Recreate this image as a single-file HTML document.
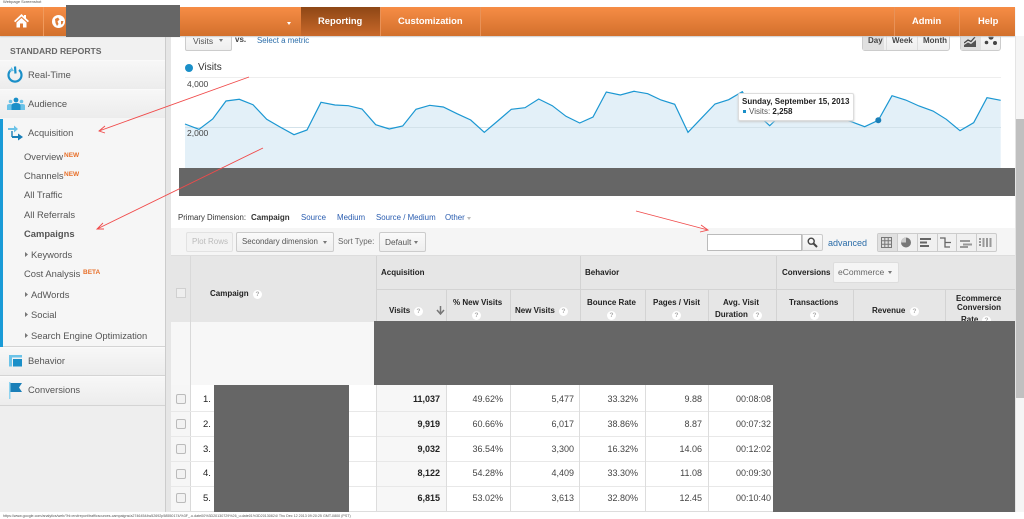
<!DOCTYPE html>
<html><head><meta charset="utf-8"><style>
html,body{margin:0;padding:0;background:#fff}
#p{position:relative;width:1024px;height:519px;overflow:hidden;background:#fff;font-family:"Liberation Sans",Arial,sans-serif;font-size:9px;color:#333;filter:blur(.3px)}
#p div,#p span.t,#p svg{position:absolute}
.t{position:absolute;white-space:nowrap;line-height:12px}
.b{font-weight:bold}
.w{color:#fff;font-weight:bold;font-size:9.4px}
.n{color:#555;font-size:9.3px}
.s{color:#555;font-size:9.4px}
.new{color:#e8702a;font-weight:bold;font-size:6.5px;line-height:6px}
.lk{color:#2a5db0;font-size:7.9px}
.h{font-weight:bold;font-size:8px;color:#222}
.q{width:9px;height:9px;border-radius:50%;background:#fff;color:#aaa;font-size:6.5px;line-height:9px;text-align:center;font-weight:bold}
.sec{left:0;width:165px;background:linear-gradient(#f7f7f7,#ececec);border-bottom:1px solid #d4d4d4;border-top:1px solid #fafafa}
.btn{background:linear-gradient(#fafafa,#eee);border:1px solid #ccc;border-radius:2px;box-sizing:border-box}
.row{left:0;width:1024px;height:12px;font-size:9px;color:#444}
.row .t{top:0}
.c1{right:584px;font-weight:bold;color:#222}.c2{right:521px}.c3{right:450px}.c4{right:386px}.c5{right:322px}.c6{right:253px}
.ln{background:#ddd}
.arr{border-top:3px solid #777;border-left:2.5px solid transparent;border-right:2.5px solid transparent;width:0;height:0}
</style></head><body><div id="p">

<span class="t" style="left:3px;top:-2px;font-size:4px;line-height:8px;color:#555">Webpage Screenshot</span>

<!-- sidebar -->
<div style="left:0;top:36px;width:165px;height:476px;background:#eee"></div>
<div style="left:165px;top:36px;width:6px;height:476px;background:#e6e6e6;border-left:1px solid #ccc;box-sizing:border-box"></div>
<div style="left:0;top:36px;width:165px;height:24px;background:#f1f1f1"></div>
<span class="t b" style="left:10px;top:45px;font-size:8.6px;color:#666">STANDARD REPORTS</span>
<div class="sec" style="top:60px;height:28px"></div>
<div class="sec" style="top:89px;height:28px"></div>
<div style="left:0;top:118px;width:165px;height:228px;background:#f6f6f6;border-bottom:1px solid #d4d4d4"></div>
<div style="left:0;top:119px;width:3px;height:228px;background:#1a9bd7"></div>
<div class="sec" style="top:347px;height:27px"></div>
<div class="sec" style="top:376px;height:28px"></div>

<svg style="left:7px;top:65px" width="17" height="18" viewBox="0 0 17 18"><path d="M4 5A6.5 6.5 0 1 0 12 5" fill="none" stroke="#1a8fc8" stroke-width="2.2"/><path d="M8 1.5L8.5 8.5" stroke="#1a8fc8" stroke-width="2.2"/><path d="M4.5 2L7 6 2.5 6.5Z" fill="#6cc3e8"/></svg>
<svg style="left:7px;top:97px" width="18" height="14" viewBox="0 0 18 14"><circle cx="3.5" cy="4.5" r="1.8" fill="#6cc3e8"/><circle cx="14.5" cy="4.5" r="1.8" fill="#6cc3e8"/><path d="M0 13V8.5Q0 7 3 7T6 9V13ZM12 13V9Q12 7 15 7T18 8.5V13Z" fill="#6cc3e8"/><circle cx="9" cy="3" r="2.4" fill="#1a8fc8"/><path d="M4.5 13V8.5Q4.5 6 9 6T13.5 8.5V13Z" fill="#1a8fc8"/></svg>
<svg style="left:8px;top:125px" width="16" height="16" viewBox="0 0 16 16"><path d="M0 3H6V0.5L10 4 6 7.5V5H0Z" fill="#6cc3e8"/><path d="M4 11H10V8.5L15 12 10 15.5V13H4Z" fill="#1a7fb8"/><path d="M4 6V12" stroke="#1a7fb8" stroke-width="1.4"/></svg>
<svg style="left:9px;top:355px" width="14" height="12" viewBox="0 0 14 12"><rect width="13" height="2.5" fill="#6cc3e8"/><rect y="2.5" width="3" height="9" fill="#6cc3e8"/><rect x="4" y="4" width="9" height="7.5" fill="#1a8fc8"/></svg>
<svg style="left:9px;top:382px" width="14" height="17" viewBox="0 0 14 17"><rect width="1.5" height="17" fill="#8fd3ef"/><path d="M1.5 1H13L10 5.5 13 10H1.5Z" fill="#1a7fb8"/></svg>

<span class="t s" style="left:28px;top:69px">Real-Time</span>
<span class="t s" style="left:28px;top:98px">Audience</span>
<span class="t s" style="left:28px;top:127px">Acquisition</span>
<span class="t s" style="left:24px;top:151px">Overview</span><span class="t new" style="left:64px;top:153px">NEW</span>
<span class="t s" style="left:24px;top:170px">Channels</span><span class="t new" style="left:64px;top:172px">NEW</span>
<span class="t s" style="left:24px;top:189px">All Traffic</span>
<span class="t s" style="left:24px;top:209px">All Referrals</span>
<span class="t s b" style="left:24px;top:228px">Campaigns</span>
<span class="t s" style="left:31px;top:249px">Keywords</span>
<span class="t s" style="left:24px;top:268px">Cost Analysis</span><span class="t new" style="left:83px;top:270px">BETA</span>
<span class="t s" style="left:31px;top:289px">AdWords</span>
<span class="t s" style="left:31px;top:309px">Social</span>
<span class="t s" style="left:31px;top:330px">Search Engine Optimization</span>
<span class="t s" style="left:28px;top:355px">Behavior</span>
<span class="t s" style="left:28px;top:384px">Conversions</span>
<svg style="left:25px;top:252px" width="4" height="90" viewBox="0 0 4 90"><path d="M0 0L3 2.500 0 5ZM0 40L3 42.500 0 45ZM0 60L3 62.500 0 65ZM0 81L3 83.500 0 86Z" fill="#777"/></svg>

<!-- top controls -->
<div class="btn" style="left:185px;top:30px;width:47px;height:21px"></div>
<span class="t n" style="left:193px;top:35px;font-size:8.5px">Visits</span>
<div class="arr" style="left:219px;top:39px"></div>
<span class="t b" style="left:235px;top:34px;font-size:8px;color:#444">vs.</span>
<span class="t lk" style="left:257px;top:35px;color:#2a6ca8">Select a metric</span>

<div class="btn" style="left:862px;top:30px;width:88px;height:21px;border-radius:3px"></div>
<div style="left:863px;top:31px;width:21px;height:19px;background:#e0e0e0"></div>
<div class="ln" style="left:886px;top:31px;width:1px;height:19px"></div>
<div class="ln" style="left:917px;top:31px;width:1px;height:19px"></div>
<span class="t b" style="left:868px;top:35px;font-size:8px;color:#444">Day</span>
<span class="t b" style="left:892px;top:35px;font-size:8px;color:#444">Week</span>
<span class="t b" style="left:923px;top:35px;font-size:8px;color:#444">Month</span>
<div class="btn" style="left:960px;top:30px;width:41px;height:21px;border-radius:3px"></div>
<div style="left:961px;top:31px;width:20px;height:19px;background:#e0e0e0"></div>
<svg style="left:964px;top:36px" width="13" height="11" viewBox="0 0 13 11"><path d="M0 7L4 4 7 5.500 11 1" fill="none" stroke="#444" stroke-width="1.300"/><path d="M0 11V9L4 6.500 7 8 12 4V11Z" fill="#555"/></svg>
<svg style="left:984px;top:34px" width="14" height="12" viewBox="0 0 14 12"><circle cx="7" cy="3" r="2.600" fill="#444"/><circle cx="2.500" cy="8.500" r="1.800" fill="#444"/><circle cx="11" cy="9" r="2" fill="#444"/></svg>

<!-- chart -->
<div style="left:185px;top:64px;width:8px;height:8px;background:#1a8fc8;border-radius:50%"></div>
<span class="t" style="left:198px;top:62px;font-size:10px;color:#333">Visits</span>
<svg style="left:0;top:0" width="1024" height="519" viewBox="0 0 1024 519">
<line x1="185" y1="77.500" x2="1001" y2="77.500" stroke="#eee"/>
<path d="M185 124L199 129.300 212.700 119 226 101 239.300 99.300 253 104.700 266.700 119.300 280 127 294 134.700 307 130 321 102.300 335 105 348.300 105.700 362 109 375.700 124.700 389.300 129 402.700 126 416 109.300 429.700 105.300 443.300 107 457 113.700 470.700 120 484.300 132.300 497.700 121 511.300 109.300 525 107.700 538.700 99 552.300 105.700 566 116.300 579.700 123 593 117 606.300 92 620.300 95 634 91.300 647.700 93.700 661 100 674.700 104.300 688 132.300 701.300 118.300 715 104 728.700 99.700 742.300 91.700 756 113 769.700 125.700 783 113 796.300 107 810 108 823 110 837 116 851.300 121.700 864.700 126.700 878.300 120.300 892 95.700 905.700 100 919 106 933 111 946.300 119.300 960 130.700 973.700 122.700 987 97.700 1000.700 100.300V168H185Z" fill="#e3f0f8"/>
<line x1="185" y1="127.500" x2="1001" y2="127.500" stroke="#d3e2ea"/>
<path d="M185 124L199 129.300 212.700 119 226 101 239.300 99.300 253 104.700 266.700 119.300 280 127 294 134.700 307 130 321 102.300 335 105 348.300 105.700 362 109 375.700 124.700 389.300 129 402.700 126 416 109.300 429.700 105.300 443.300 107 457 113.700 470.700 120 484.300 132.300 497.700 121 511.300 109.300 525 107.700 538.700 99 552.300 105.700 566 116.300 579.700 123 593 117 606.300 92 620.300 95 634 91.300 647.700 93.700 661 100 674.700 104.300 688 132.300 701.300 118.300 715 104 728.700 99.700 742.300 91.700 756 113 769.700 125.700 783 113 796.300 107 810 108 823 110 837 116 851.300 121.700 864.700 126.700 878.300 120.300 892 95.700 905.700 100 919 106 933 111 946.300 119.300 960 130.700 973.700 122.700 987 97.700 1000.700 100.300" fill="none" stroke="#1b97d2" stroke-width="1.200"/>
<circle cx="878.300" cy="120.300" r="3" fill="#1a7fb8"/>
</svg>
<span class="t" style="left:187px;top:78px;font-size:8.500px;color:#444">4,000</span>
<span class="t" style="left:187px;top:127px;font-size:8.500px;color:#444">2,000</span>
<div style="left:738px;top:93px;width:116px;height:28px;background:#fff;border:1px solid #ddd;box-sizing:border-box;box-shadow:0 1px 2px #ccc;border-radius:2px"></div>
<span class="t b" style="left:742px;top:96px;font-size:8px;color:#222">Sunday, September 15, 2013</span>
<div style="left:743px;top:110px;width:3px;height:3px;background:#1a8fc8"></div>
<span class="t" style="left:749px;top:106px;font-size:8px;color:#555">Visits: <b style="color:#222">2,258</b></span>

<!-- primary dimension -->
<span class="t" style="left:178px;top:212px;font-size:7.800px;color:#333">Primary Dimension:</span>
<span class="t b" style="left:251px;top:212px;font-size:8px;color:#333">Campaign</span>
<span class="t lk" style="left:301px;top:212px">Source</span>
<span class="t lk" style="left:337px;top:212px">Medium</span>
<span class="t lk" style="left:376px;top:212px">Source / Medium</span>
<span class="t lk" style="left:445px;top:212px">Other</span>
<div class="arr" style="left:467px;top:217px;border-top-color:#bbb"></div>

<!-- toolbar -->
<div style="left:171px;top:228px;width:844px;height:28px;background:#f5f5f5;border-bottom:1px solid #ddd;box-sizing:border-box"></div>
<div class="btn" style="left:186px;top:232px;width:47px;height:20px;background:#f3f3f3;border-color:#e2e2e2"></div>
<span class="t" style="left:192px;top:236px;font-size:8px;color:#bbb">Plot Rows</span>
<div class="btn" style="left:236px;top:232px;width:98px;height:20px"></div>
<span class="t" style="left:242px;top:236px;font-size:7.900px;color:#555">Secondary dimension</span>
<div class="arr" style="left:323px;top:241px"></div>
<span class="t" style="left:338px;top:236px;font-size:8px;color:#666">Sort Type:</span>
<div class="btn" style="left:379px;top:232px;width:47px;height:20px"></div>
<span class="t" style="left:385px;top:236px;font-size:8.300px;color:#555">Default</span>
<div class="arr" style="left:414px;top:241px"></div>
<div style="left:707px;top:234px;width:95px;height:17px;background:#fff;border:1px solid #bbb;box-sizing:border-box"></div>
<div class="btn" style="left:802px;top:234px;width:21px;height:17px;border-radius:0 2px 2px 0"></div>
<svg style="left:807px;top:237px" width="11" height="11" viewBox="0 0 11 11"><circle cx="4.200" cy="4.200" r="3" fill="none" stroke="#444" stroke-width="1.400"/><path d="M6.500 6.500L10 10" stroke="#444" stroke-width="2"/></svg>
<span class="t" style="left:828px;top:237px;font-size:9px;color:#2a6ca8">advanced</span>
<div class="btn" style="left:877px;top:233px;width:120px;height:19px;background:#f0f0f0"></div>
<div style="left:878px;top:234px;width:20px;height:17px;background:#e0e0e0"></div>
<div class="ln" style="left:897px;top:234px;width:1px;height:17px;background:#ccc"></div>
<div class="ln" style="left:917px;top:234px;width:1px;height:17px;background:#ccc"></div>
<div class="ln" style="left:937px;top:234px;width:1px;height:17px;background:#ccc"></div>
<div class="ln" style="left:956px;top:234px;width:1px;height:17px;background:#ccc"></div>
<div class="ln" style="left:976px;top:234px;width:1px;height:17px;background:#ccc"></div>
<svg style="left:881px;top:237px" width="114" height="12" viewBox="0 0 114 12">
<path d="M.5 .5H10.500V10.500H.5ZM.5 3.800H10.500M.5 7.200H10.500M3.800 .5V10.500M7.200 .5V10.500" fill="none" stroke="#777"/>
<circle cx="25" cy="5.500" r="5" fill="#777"/><path d="M25 5.500V.5A5 5 0 0 0 20 5.500Z" fill="#ccc"/>
<path d="M39 1H50V3H39ZM39 4.500H46V6.500H39ZM39 8H48V10H39Z" fill="#666"/>
<path d="M59 1H64V5.500H70M64 5.500V10H69" fill="none" stroke="#666" stroke-width="1.300"/>
<path d="M79 3H89V5H79ZM82 6.500H91V8.500H82ZM79 9H87V11H79Z" fill="#999"/>
<path d="M98 1H100V3H98ZM98 4H100V6H98ZM98 7H100V9H98ZM101.500 1H103.500V10H101.500ZM105 1H107V10H105ZM108.500 1H110.500V10H108.500Z" fill="#999"/>
</svg>

<!-- table header -->
<div style="left:171px;top:256px;width:844px;height:66px;background:#e6e6e6"></div>
<div style="left:171px;top:322px;width:204px;height:63px;background:#f7f7f7"></div>
<div style="left:171px;top:385px;width:844px;height:127px;background:#fff"></div>
<div style="left:171px;top:385px;width:20px;height:127px;background:#f6f6f6"></div>
<div class="ln" style="left:376px;top:289px;width:639px;height:1px;background:#d3d3d3"></div>
<div class="ln" style="left:190px;top:256px;width:1px;height:256px;background:#d9d9d9"></div>
<div class="ln" style="left:376px;top:256px;width:1px;height:66px;background:#d3d3d3"></div>
<div class="ln" style="left:580px;top:256px;width:1px;height:66px;background:#d3d3d3"></div>
<div class="ln" style="left:776px;top:256px;width:1px;height:66px;background:#d3d3d3"></div>
<div class="ln" style="left:446px;top:289px;width:1px;height:33px;background:#d3d3d3"></div>
<div class="ln" style="left:510px;top:289px;width:1px;height:33px;background:#d3d3d3"></div>
<div class="ln" style="left:645px;top:289px;width:1px;height:33px;background:#d3d3d3"></div>
<div class="ln" style="left:708px;top:289px;width:1px;height:33px;background:#d3d3d3"></div>
<div class="ln" style="left:853px;top:289px;width:1px;height:33px;background:#d3d3d3"></div>
<div class="ln" style="left:945px;top:289px;width:1px;height:33px;background:#d3d3d3"></div>
<div style="left:176px;top:288px;width:10px;height:10px;background:#eee;border:1px solid #d0d0d0;box-sizing:border-box"></div>
<span class="t h" style="left:210px;top:288px">Campaign</span><div class="q" style="left:253px;top:290px">?</div>
<span class="t h" style="left:381px;top:267px">Acquisition</span>
<span class="t h" style="left:585px;top:267px">Behavior</span>
<span class="t h" style="left:782px;top:267px">Conversions</span>
<div class="btn" style="left:833px;top:262px;width:66px;height:21px;background:#f5f5f5;border-color:#ddd"></div>
<span class="t" style="left:838px;top:266px;font-size:8.500px;color:#666">eCommerce</span>
<div class="arr" style="left:888px;top:271px"></div>
<span class="t h" style="left:389px;top:305px">Visits</span><div class="q" style="left:414px;top:307px">?</div>
<svg style="left:436px;top:306px" width="9" height="9" viewBox="0 0 9 9"><path d="M4.500 0V7M1 4L4.500 8 8 4" fill="none" stroke="#777" stroke-width="1.500"/></svg>
<span class="t h" style="left:453px;top:297px">% New Visits</span><div class="q" style="left:472px;top:311px">?</div>
<span class="t h" style="left:515px;top:305px">New Visits</span><div class="q" style="left:559px;top:307px">?</div>
<span class="t h" style="left:587px;top:297px">Bounce Rate</span><div class="q" style="left:607px;top:311px">?</div>
<span class="t h" style="left:653px;top:297px">Pages / Visit</span><div class="q" style="left:672px;top:311px">?</div>
<span class="t h" style="left:723px;top:297px">Avg. Visit</span>
<span class="t h" style="left:715px;top:309px">Duration</span><div class="q" style="left:753px;top:311px">?</div>
<span class="t h" style="left:789px;top:297px">Transactions</span><div class="q" style="left:810px;top:311px">?</div>
<span class="t h" style="left:872px;top:305px">Revenue</span><div class="q" style="left:910px;top:307px">?</div>
<span class="t h" style="left:956px;top:293px">Ecommerce</span>
<span class="t h" style="left:957px;top:302px">Conversion</span>
<span class="t h" style="left:961px;top:314px">Rate</span><div class="q" style="left:982px;top:316px">?</div>

<!-- rows -->
<div style="left:376px;top:385px;width:70px;height:127px;background:#f7f7f7"></div>
<div class="ln" style="left:171px;top:411px;width:602px;height:1px;background:#e8e8e8"></div>
<div class="ln" style="left:171px;top:436px;width:602px;height:1px;background:#e8e8e8"></div>
<div class="ln" style="left:171px;top:461px;width:602px;height:1px;background:#e8e8e8"></div>
<div class="ln" style="left:171px;top:486px;width:602px;height:1px;background:#e8e8e8"></div>
<div class="ln" style="left:171px;top:511px;width:602px;height:1px;background:#ddd"></div>
<div class="ln" style="left:376px;top:385px;width:1px;height:127px"></div>
<div class="ln" style="left:446px;top:385px;width:1px;height:127px"></div>
<div class="ln" style="left:510px;top:385px;width:1px;height:127px"></div>
<div class="ln" style="left:579px;top:385px;width:1px;height:127px"></div>
<div class="ln" style="left:645px;top:385px;width:1px;height:127px"></div>
<div class="ln" style="left:708px;top:385px;width:1px;height:127px"></div>

<div style="left:176px;top:394px;width:10px;height:10px;background:#f2f2f2;border:1px solid #bbb;border-radius:2px;box-sizing:border-box"></div>
<div style="left:176px;top:419px;width:10px;height:10px;background:#f2f2f2;border:1px solid #bbb;border-radius:2px;box-sizing:border-box"></div>
<div style="left:176px;top:444px;width:10px;height:10px;background:#f2f2f2;border:1px solid #bbb;border-radius:2px;box-sizing:border-box"></div>
<div style="left:176px;top:469px;width:10px;height:10px;background:#f2f2f2;border:1px solid #bbb;border-radius:2px;box-sizing:border-box"></div>
<div style="left:176px;top:493px;width:10px;height:10px;background:#f2f2f2;border:1px solid #bbb;border-radius:2px;box-sizing:border-box"></div>
<span class="t" style="left:203px;top:394px;color:#222;font-size:9.500px">1.</span>
<span class="t" style="left:203px;top:419px;color:#222;font-size:9.500px">2.</span>
<span class="t" style="left:203px;top:444px;color:#222;font-size:9.500px">3.</span>
<span class="t" style="left:203px;top:468px;color:#222;font-size:9.500px">4.</span>
<span class="t" style="left:203px;top:493px;color:#222;font-size:9.500px">5.</span>

<div class="row" style="top:393px"><span class="t c1">11,037</span><span class="t c2">49.62%</span><span class="t c3">5,477</span><span class="t c4">33.32%</span><span class="t c5">9.88</span><span class="t c6">00:08:08</span></div>
<div class="row" style="top:418px"><span class="t c1">9,919</span><span class="t c2">60.66%</span><span class="t c3">6,017</span><span class="t c4">38.86%</span><span class="t c5">8.87</span><span class="t c6">00:07:32</span></div>
<div class="row" style="top:443px"><span class="t c1">9,032</span><span class="t c2">36.54%</span><span class="t c3">3,300</span><span class="t c4">16.32%</span><span class="t c5">14.06</span><span class="t c6">00:12:02</span></div>
<div class="row" style="top:467px"><span class="t c1">8,122</span><span class="t c2">54.28%</span><span class="t c3">4,409</span><span class="t c4">33.30%</span><span class="t c5">11.08</span><span class="t c6">00:09:30</span></div>
<div class="row" style="top:492px"><span class="t c1">6,815</span><span class="t c2">53.02%</span><span class="t c3">3,613</span><span class="t c4">32.80%</span><span class="t c5">12.45</span><span class="t c6">00:10:40</span></div>

<!-- redactions -->
<div style="left:179px;top:168px;width:836px;height:28px;background:#666"></div>
<div style="left:374px;top:321px;width:641px;height:64px;background:#666"></div>
<div style="left:773px;top:385px;width:242px;height:127px;background:#666"></div>
<div style="left:214px;top:385px;width:135px;height:127px;background:#666"></div>

<!-- header -->
<div style="left:0;top:7px;width:1015px;height:29px;background:linear-gradient(#f68c45,#d2702c);box-shadow:0 1px 1px #ccc"></div>
<div style="left:301px;top:7px;width:79px;height:29px;background:linear-gradient(#8e4716,#c9692a)"></div>
<div style="left:43px;top:7px;width:1px;height:29px;background:#f09a5c"></div>
<div style="left:380px;top:7px;width:1px;height:29px;background:#e89258"></div>
<div style="left:480px;top:7px;width:1px;height:29px;background:#e89258"></div>
<div style="left:894px;top:7px;width:1px;height:29px;background:#e89258"></div>
<div style="left:959px;top:7px;width:1px;height:29px;background:#e89258"></div>
<svg style="left:14px;top:14px" width="15" height="14" viewBox="0 0 15 14"><path d="M7.500 0L0 7 1.200 8.300 7.500 2.500 13.800 8.300 15 7 12 4.200V1H10V2.400Z" fill="#fff"/><path d="M2.500 8.500L7.500 4 12.500 8.500V13.500H9V9.500H6V13.500H2.500Z" fill="#fff"/></svg>
<svg style="left:52px;top:15px" width="13" height="13" viewBox="0 0 13 13"><circle cx="6.500" cy="6.500" r="6.500" fill="#fff"/><path d="M3 4L6 2.500 7.500 4.500 5.500 6.500 6.500 9 5 11 3.500 8ZM9 6L11.500 6 10.500 9 9 9.500Z" fill="#e07f3a"/></svg>
<div class="arr" style="left:287px;top:22px;border-top-color:#fff"></div>
<span class="t w" style="left:318px;top:15px">Reporting</span>
<span class="t w" style="left:398px;top:15px">Customization</span>
<span class="t w" style="left:912px;top:15px">Admin</span>
<span class="t w" style="left:978px;top:15px">Help</span>
<div style="left:66px;top:5px;width:114px;height:32px;background:#666"></div>

<!-- scrollbar -->
<div style="left:1015px;top:36px;width:9px;height:476px;background:#f5f5f5;border-left:1px solid #e4e4e4;box-sizing:border-box"></div>
<div style="left:1016px;top:119px;width:8px;height:279px;background:#c0c0c0"></div>

<!-- red arrows -->
<svg style="left:0;top:0" width="1024" height="519" viewBox="0 0 1024 519" fill="none" stroke="#f04a4a" stroke-width="0.900">
<path d="M249 77L99 131M105 126L99 131 105 133"/>
<path d="M263 148L97 229M103 223L97 229 104 229"/>
<path d="M636 211L708 230M701 225L708 230 700 232"/>
</svg>

<!-- footer -->
<div style="left:0;top:512px;width:1024px;height:7px;background:#fff"></div>
<span class="t" style="left:3px;top:513px;font-size:3.650px;line-height:6px;color:#555">https://www.google.com/analytics/web/?hl=en#report/trafficsources-campaigns/a27464544w52692p58550174/%3F_.u.date00%3D20130729%26_u.date01%3D20130824/ Thu Dec 12 2013 09:20:25 GMT-0800 (PST)</span>
</div></body></html>
